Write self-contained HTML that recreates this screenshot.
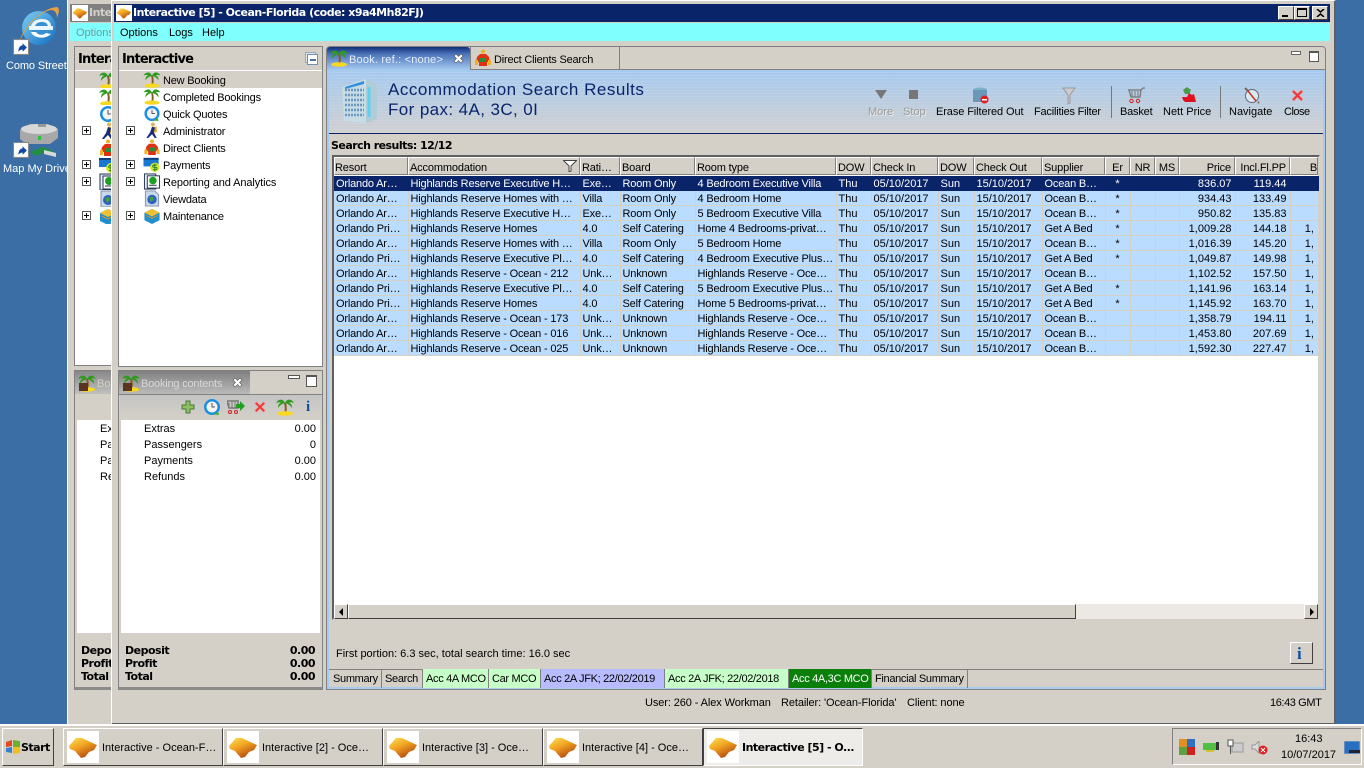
<!DOCTYPE html>
<html><head><meta charset="utf-8"><title>Interactive</title>
<style>
html,body{margin:0;padding:0}
body{width:1364px;height:768px;overflow:hidden;position:relative;background:#3a6ea5;font:11px/13px "Liberation Sans",sans-serif;color:#000}
.a,.t,svg.i{position:absolute}
.t{white-space:nowrap;line-height:15px}
.b{font-family:"DejaVu Sans",sans-serif;font-weight:bold;letter-spacing:-.5px;line-height:13px}
.n{letter-spacing:-.2px}
.btn{position:absolute;background:#d4d0c8;border:1px solid;border-color:#fff #404040 #404040 #fff;box-sizing:border-box}
table{position:absolute;left:334px;top:176px;width:984px;border-collapse:collapse;table-layout:fixed;font-size:11px}
td{height:12px;padding:2px 0 0 2px;border:1px solid #d4d0c8;border-top:0;border-left:0;white-space:nowrap;overflow:hidden;line-height:12px;background:#b9dcff}
td:nth-child(-n+5),td:nth-child(10){letter-spacing:-.18px}
td.r{text-align:right;padding:2px 3px 0 0}
td.c{text-align:center;padding:2px 0 0}
tr.s td{background:#0a246a;color:#fff;border-color:#0a246a}
.h{position:absolute;top:157px;height:18px;box-sizing:border-box;background:#d4d0c8;border-right:1px solid #808080;border-left:1px solid #fff;border-top:1px solid #fff;border-bottom:1px solid #808080;padding:4px 0 0 0;white-space:nowrap;overflow:hidden;letter-spacing:-.15px}
.bt{position:absolute;top:669px;height:19px;box-sizing:border-box;border-right:1px solid #808080;padding:3px 0 0 3px;white-space:nowrap;letter-spacing:-.32px;line-height:15px}
.task{position:absolute;top:728px;height:38px;width:160px;box-sizing:border-box;background:#d4d0c8;border:1px solid;border-color:#fff #404040 #404040 #fff}
.task .sq{position:absolute;left:3px;top:2px;width:32px;height:32px;background:#fff}
.task span{position:absolute;left:38px;top:13px;white-space:nowrap}
.lg{position:absolute;background:#fff}
</style></head><body>
<svg width="0" height="0" style="position:absolute">
<defs>
<linearGradient id="og" x1="0" y1="0" x2=".6" y2="1"><stop offset="0" stop-color="#ffe050"/><stop offset=".5" stop-color="#f0a020"/><stop offset="1" stop-color="#b04a10"/></linearGradient>
<linearGradient id="ie" x1="0" y1="0" x2="1" y2="1"><stop offset="0" stop-color="#7fd0f5"/><stop offset="1" stop-color="#0f6cc0"/></linearGradient>
<symbol id="logo" viewBox="0 0 32 32"><path d="M2 15L9 7h6l15 7-3 5-5 2-4 5-4 1-6-7-5-2z" fill="url(#og)"/></symbol>
<symbol id="palm" viewBox="0 0 18 18"><path d="M8 5c1 4 1 7 0 10h2c1-3 1-6 0-10z" fill="#8a5a20"/><path d="M9 5C7 0 2 1 0 5c2-1 4-1 5 0-2 0-3 2-3 5 2-3 4-4 7-5zM9 5c2-5 7-4 9 0-2-1-4-1-5 0 2 0 3 2 3 5-2-3-4-4-7-5z" fill="#2f9a20"/><ellipse cx="9" cy="15.500" rx="8" ry="2.300" fill="#f8d820"/></symbol>
<symbol id="clock" viewBox="0 0 18 18"><circle cx="9" cy="9" r="8" fill="#1a8fe0"/><circle cx="9" cy="9" r="5.500" fill="#f4f4f4"/><path d="M9 5v4h3" stroke="#555" fill="none"/><path d="M6 16a8 8 0 0 0 9-3l1 4z" fill="#40b030"/></symbol>
<symbol id="run" viewBox="0 0 18 18"><circle cx="10" cy="2.500" r="2" fill="#e0b060"/><rect x="9" y="5" width="5" height="6" fill="#e0a820"/><path d="M9 5l-2 6-4 6h2l4-4 3 4h2l-3-6 1-5z" fill="#1a2a80"/></symbol>
<symbol id="dc" viewBox="0 0 18 18"><circle cx="9" cy="2.500" r="2" fill="#f0b020"/><path d="M3 8l3-3h6l3 3 1 5h-3v4H5v-4H2z" fill="#e03010"/><rect x="6" y="9" width="6" height="4" fill="#209040"/><rect x="1" y="11" width="3" height="5" fill="#f0b020"/><rect x="14" y="11" width="3" height="5" fill="#f0b020"/></symbol>
<symbol id="pay" viewBox="0 0 18 18"><rect x="0" y="2" width="16" height="9" fill="#1878d0"/><rect x="0" y="2" width="16" height="2" fill="#104080"/><circle cx="12" cy="12" r="5" fill="#d8e830"/><path d="M14 9.500h-3a1.200 1.200 0 0 0 0 2.500h2a1.200 1.200 0 0 1 0 2.500h-3M12 8v8" stroke="#208020" fill="none"/></symbol>
<symbol id="rep" viewBox="0 0 18 18"><rect x="1" y="1" width="12" height="16" fill="#e8f0f8" stroke="#203050"/><rect x="4" y="3" width="13" height="13" fill="#fff" stroke="#203050"/><circle cx="10" cy="8" r="4" fill="#20a020"/><path d="M6 13h8" stroke="#203050"/></symbol>
<symbol id="view" viewBox="0 0 18 18"><path d="M2 1h10l4 4v12H2z" fill="#c8d8e8" stroke="#8090a8"/><circle cx="9" cy="10" r="5" fill="#3060c0"/><path d="M6 8l4-1 1 3-3 3z" fill="#40a040"/></symbol>
<symbol id="mnt" viewBox="0 0 18 18"><path d="M1 6l8-4 8 4v8l-8 4-8-4z" fill="#2090d0"/><path d="M1 6l8-4 8 4-8 4z" fill="#f0c030"/><path d="M3 9l6 3 6-3" stroke="#e09020" fill="none"/></symbol>
<symbol id="x" viewBox="0 0 16 16"><path d="M2 4l2-2 4 4 4-4 2 2-4 4 4 4-2 2-4-4-4 4-2-2 4-4z" fill="#e83a3a" stroke="#f4a0a0" stroke-width=".6"/></symbol>
<symbol id="short" viewBox="0 0 15 15"><rect x=".5" y=".5" width="14" height="14" fill="#fff" stroke="#888"/><path d="M5 12c0-4 2-6 4-6V4l4 4-4 4v-2c-2 0-3 1-4 2z" fill="#1048a8"/></symbol>
</defs></svg>

<!-- desktop icons -->
<svg class="i" style="left:15px;top:6px" width="46" height="42" viewBox="0 0 46 42"><circle cx="24" cy="22" r="17" fill="url(#ie)"/><ellipse cx="25" cy="22" rx="9" ry="7.500" fill="#3a8fd0"/><rect x="14" y="20" width="24" height="4" fill="#e8f6ff"/><path d="M27 13c6 0 9 3 9 7H16c1-4 5-7 11-7z" fill="#fff" opacity=".9"/><path d="M27 16c3 0 5 1 6 4H20c1-3 4-4 7-4z" fill="#3a8fd0"/><path d="M16 26c2 6 14 8 20 2l-5-1c-4 3-8 2-10-1z" fill="#fff"/><path d="M4 36C10 18 28 2 42 1c3 1 2 6 0 11 0-5-2-8-6-8C24 6 12 20 4 36z" fill="#e8a040"/></svg>
<svg class="i" style="left:13px;top:39px" width="16" height="16"><use href="#short"/></svg>
<div class="t" style="left:6px;top:59px;color:#fff;letter-spacing:-.1px">Como Street</div>
<svg class="i" style="left:18px;top:122px" width="42" height="38" viewBox="0 0 42 38"><path d="M2 8l10-6h18l10 5v9l-8 6H8l-6-5z" fill="#a8a8a8"/><ellipse cx="21" cy="7" rx="18" ry="5" fill="#d8d8d8"/><rect x="20" y="2" width="8" height="3" fill="#999"/><rect x="20" y="14" width="3" height="4" fill="#30c040"/><path d="M12 30l12-5 10 3 1 4-10-1-7 3z" fill="#209040"/><path d="M26 28l12 3v4l-12-3z" fill="#d8d8d8"/></svg>
<svg class="i" style="left:13px;top:142px" width="16" height="16"><use href="#short"/></svg>
<div class="t" style="left:3px;top:162px;color:#fff">Map My Drive</div>

<!-- back window -->
<div class="a" style="left:67px;top:0;width:46px;height:724px;background:#d4d0c8;border-left:1px solid #fff"></div>
<div class="a" style="left:70px;top:4px;width:42px;height:18px;background:#808080"></div>
<div class="lg" style="left:72px;top:5px;width:16px;height:16px"><svg width="16" height="16"><use href="#logo"/></svg></div>
<div class="t b" style="left:89px;top:6px;color:#d4d0c8">Inte</div>
<div class="a" style="left:70px;top:23px;width:42px;height:18px;background:#80ffff"></div>
<div class="t" style="left:76px;top:26px;color:#6f9a9a">Options</div>
<div class="a" style="left:74px;top:46px;width:37px;height:320px;background:#fff;border:1px solid #808080;border-right:0;box-sizing:border-box"></div>
<div class="a" style="left:75px;top:47px;width:36px;height:23px;background:#d4d0c8;border-bottom:1px solid #fff"></div>
<div class="t b" style="left:78px;top:53px;font-size:13px;letter-spacing:-.8px">Intera</div>
<div class="a" style="left:75px;top:71px;width:36px;height:17px;background:#d4d0c8"></div>
<svg class="i" style="left:99px;top:71px" width="12" height="17" viewBox="0 0 12 17"><use href="#palm" width="18" height="18"/></svg>
<svg class="i" style="left:99px;top:88px" width="12" height="17" viewBox="0 0 12 17"><use href="#palm" width="18" height="18"/></svg>
<svg class="i" style="left:99px;top:105px" width="12" height="17" viewBox="0 0 12 17"><use href="#clock" width="18" height="18"/></svg>
<svg class="i" style="left:99px;top:122px" width="12" height="17" viewBox="0 0 12 17"><use href="#run" width="18" height="18"/></svg>
<svg class="i" style="left:99px;top:139px" width="12" height="17" viewBox="0 0 12 17"><use href="#dc" width="18" height="18"/></svg>
<svg class="i" style="left:99px;top:156px" width="12" height="17" viewBox="0 0 12 17"><use href="#pay" width="18" height="18"/></svg>
<svg class="i" style="left:99px;top:173px" width="12" height="17" viewBox="0 0 12 17"><use href="#rep" width="18" height="18"/></svg>
<svg class="i" style="left:99px;top:190px" width="12" height="17" viewBox="0 0 12 17"><use href="#view" width="18" height="18"/></svg>
<svg class="i" style="left:99px;top:207px" width="12" height="17" viewBox="0 0 12 17"><use href="#mnt" width="18" height="18"/></svg>
<svg class="i" style="left:82px;top:126px" width="9" height="9"><rect x=".5" y=".5" width="8" height="8" fill="#fff" stroke="#555"/><path d="M2 4.500h5M4.500 2v5" stroke="#000"/></svg>
<svg class="i" style="left:82px;top:160px" width="9" height="9"><rect x=".5" y=".5" width="8" height="8" fill="#fff" stroke="#555"/><path d="M2 4.500h5M4.500 2v5" stroke="#000"/></svg>
<svg class="i" style="left:82px;top:177px" width="9" height="9"><rect x=".5" y=".5" width="8" height="8" fill="#fff" stroke="#555"/><path d="M2 4.500h5M4.500 2v5" stroke="#000"/></svg>
<svg class="i" style="left:82px;top:211px" width="9" height="9"><rect x=".5" y=".5" width="8" height="8" fill="#fff" stroke="#555"/><path d="M2 4.500h5M4.500 2v5" stroke="#000"/></svg>
<div class="a" style="left:74px;top:370px;width:37px;height:320px;background:#d4d0c8;border:1px solid #808080;border-right:0;border-bottom:3px solid #8a8a8a;box-sizing:border-box"></div>
<div class="a" style="left:75px;top:371px;width:36px;height:23px;background:linear-gradient(#888,#c0c0c0)"></div>
<svg class="i" style="left:78px;top:374px" width="18" height="18"><use href="#palm"/><rect x="1" y="9" width="9" height="8" fill="#5a3420"/></svg>
<div class="t" style="left:97px;top:377px;color:#d4d0c8">Bo</div>
<div class="a" style="left:77px;top:420px;width:34px;height:213px;background:#fff"></div>
<div class="t" style="left:100px;top:422px">Ex</div><div class="t" style="left:100px;top:438px">Pa</div><div class="t" style="left:100px;top:454px">Pa</div><div class="t" style="left:100px;top:470px">Re</div>
<div class="t b" style="left:81px;top:644px">Depo</div><div class="t b" style="left:81px;top:657px">Profit</div><div class="t b" style="left:81px;top:670px">Total</div>

<!-- main window -->
<div class="a" style="left:111px;top:0;width:1225px;height:725px;background:#d4d0c8;border-left:1px solid #fff;border-top:1px solid #fff;border-right:2px solid #606060;border-bottom:2px solid #606060;box-sizing:border-box"></div>
<div class="a" style="left:114px;top:4px;width:1216px;height:18px;background:#0a246a"></div>
<div class="lg" style="left:116px;top:5px;width:16px;height:16px"><svg width="16" height="16"><use href="#logo"/></svg></div>
<div class="t b" style="left:133px;top:6px;color:#fff;font-size:11px;letter-spacing:-.49px">Interactive [5] - Ocean-Florida (code: x9a4Mh82FJ)</div>
<div class="btn" style="left:1278px;top:6px;width:16px;height:14px"><div class="a" style="left:3px;top:8px;width:6px;height:2px;background:#000"></div></div>
<div class="btn" style="left:1294px;top:6px;width:16px;height:14px"><div class="a" style="left:2px;top:1px;width:10px;height:9px;border:1px solid #000;border-top-width:2px;box-sizing:border-box"></div></div>
<div class="btn" style="left:1312px;top:6px;width:16px;height:14px"><svg class="i" style="left:3px;top:2px" width="9" height="8"><path d="M1 0l3.500 3L8 0M1 8l3.500-3L8 8" stroke="#000" stroke-width="1.500" fill="none"/></svg></div>
<div class="a" style="left:114px;top:23px;width:1216px;height:18px;background:#80ffff"></div>
<div class="t" style="left:120px;top:26px">Options</div><div class="t" style="left:169px;top:26px">Logs</div><div class="t" style="left:202px;top:26px">Help</div>

<!-- nav panel -->
<div class="a" style="left:118px;top:46px;width:205px;height:321px;background:#fff;border:1px solid #808080;box-sizing:border-box"></div>
<div class="a" style="left:119px;top:47px;width:203px;height:23px;background:#d4d0c8;border-bottom:1px solid #fff"></div>
<div class="t b" style="left:122px;top:53px;font-size:13px;letter-spacing:-.8px">Interactive</div>
<svg class="i" style="left:305px;top:52px" width="13" height="13"><rect x=".5" y=".5" width="10" height="10" fill="#d8e4f0" stroke="#9ab"/><rect x="2.500" y="2.500" width="10" height="10" fill="#fff" stroke="#7090b0"/><path d="M5 8h6" stroke="#104080" stroke-width="1.500"/></svg>
<div class="a" style="left:119px;top:71px;width:203px;height:17px;background:#d4d0c8"></div>
<svg class="i" style="left:143px;top:71px" width="18" height="17"><use href="#palm"/></svg>
<svg class="i" style="left:143px;top:88px" width="18" height="17"><use href="#palm"/></svg>
<svg class="i" style="left:143px;top:105px" width="18" height="17"><use href="#clock"/></svg>
<svg class="i" style="left:143px;top:122px" width="18" height="17"><use href="#run"/></svg>
<svg class="i" style="left:143px;top:139px" width="18" height="17"><use href="#dc"/></svg>
<svg class="i" style="left:143px;top:156px" width="18" height="17"><use href="#pay"/></svg>
<svg class="i" style="left:143px;top:173px" width="18" height="17"><use href="#rep"/></svg>
<svg class="i" style="left:143px;top:190px" width="18" height="17"><use href="#view"/></svg>
<svg class="i" style="left:143px;top:207px" width="18" height="17"><use href="#mnt"/></svg>
<svg class="i" style="left:126px;top:126px" width="9" height="9"><rect x=".5" y=".5" width="8" height="8" fill="#fff" stroke="#555"/><path d="M2 4.500h5M4.500 2v5" stroke="#000"/></svg>
<svg class="i" style="left:126px;top:160px" width="9" height="9"><rect x=".5" y=".5" width="8" height="8" fill="#fff" stroke="#555"/><path d="M2 4.500h5M4.500 2v5" stroke="#000"/></svg>
<svg class="i" style="left:126px;top:177px" width="9" height="9"><rect x=".5" y=".5" width="8" height="8" fill="#fff" stroke="#555"/><path d="M2 4.500h5M4.500 2v5" stroke="#000"/></svg>
<svg class="i" style="left:126px;top:211px" width="9" height="9"><rect x=".5" y=".5" width="8" height="8" fill="#fff" stroke="#555"/><path d="M2 4.500h5M4.500 2v5" stroke="#000"/></svg>
<div class="t n" style="left:163px;top:74px">New Booking</div>
<div class="t n" style="left:163px;top:91px">Completed Bookings</div>
<div class="t n" style="left:163px;top:108px">Quick Quotes</div>
<div class="t n" style="left:163px;top:125px">Administrator</div>
<div class="t n" style="left:163px;top:142px">Direct Clients</div>
<div class="t n" style="left:163px;top:159px">Payments</div>
<div class="t n" style="left:163px;top:176px;letter-spacing:-.1px">Reporting and Analytics</div>
<div class="t n" style="left:163px;top:193px">Viewdata</div>
<div class="t n" style="left:163px;top:210px">Maintenance</div>

<!-- booking contents -->
<div class="a" style="left:118px;top:370px;width:205px;height:320px;background:#d4d0c8;border:1px solid #808080;border-bottom:3px solid #8a8a8a;box-sizing:border-box"></div>
<div class="a" style="left:119px;top:371px;width:131px;height:23px;background:linear-gradient(#808080,#bbb);"></div>
<div class="a" style="left:119px;top:394px;width:203px;height:1px;background:#808080"></div>
<svg class="i" style="left:122px;top:374px" width="18" height="18"><use href="#palm"/><rect x="1" y="9" width="9" height="8" fill="#5a3420"/></svg>
<div class="t n" style="left:141px;top:377px;color:#d8d8d8">Booking contents</div>
<svg class="i" style="left:232px;top:377px" width="11" height="11"><path d="M1 3l2-2 2.500 2.500L8 1l2 2-2.500 2.500L10 8l-2 2-2.500-2.500L3 10 1 8l2.500-2.500z" fill="#fff" stroke="#555" stroke-width=".6"/></svg>
<div class="a" style="left:288px;top:375px;width:10px;border:1px solid #555;background:#fff;height:2px"></div>
<div class="a" style="left:306px;top:375px;width:9px;height:9px;border:1px solid #555;border-top-width:2px;background:#fff"></div>
<div class="a" style="left:120px;top:395px;width:201px;height:24px;background:linear-gradient(#c4c4c4,#d4d0c8)"></div>
<svg class="i" style="left:181px;top:400px" width="14" height="14"><path d="M5 1h4v4h4v4H9v4H5V9H1V5h4z" fill="#8ec060" stroke="#4a7a3a"/></svg>
<svg class="i" style="left:203px;top:398px" width="18" height="18"><use href="#clock"/></svg>
<svg class="i" style="left:227px;top:399px" width="18" height="16" viewBox="0 0 18 16"><path d="M0 2h11v7H2z" fill="none" stroke="#777" stroke-width="1.500"/><path d="M2 4v5M5 3v6M8 3v6" stroke="#777"/><circle cx="3" cy="13" r="1.500" fill="none" stroke="#d02020"/><circle cx="9" cy="13" r="1.500" fill="none" stroke="#d02020"/><path d="M9 5h4V2l5 5-5 5V9H9z" fill="#20a020"/></svg>
<svg class="i" style="left:253px;top:400px" width="14" height="14"><use href="#x"/></svg>
<svg class="i" style="left:276px;top:398px" width="18" height="18"><use href="#palm"/></svg>
<div class="t" style="left:306px;top:399px;font:bold 15px 'Liberation Serif',serif;color:#1050a0">i</div>
<div class="a" style="left:121px;top:420px;width:199px;height:213px;background:#fff"></div>
<div class="t" style="left:144px;top:422px">Extras</div><div class="t" style="right:1048px;top:422px">0.00</div>
<div class="t" style="left:144px;top:438px">Passengers</div><div class="t" style="right:1048px;top:438px">0</div>
<div class="t" style="left:144px;top:454px">Payments</div><div class="t" style="right:1048px;top:454px">0.00</div>
<div class="t" style="left:144px;top:470px">Refunds</div><div class="t" style="right:1048px;top:470px">0.00</div>
<div class="t b" style="left:125px;top:644px">Deposit</div><div class="t b" style="right:1049px;top:644px">0.00</div>
<div class="t b" style="left:125px;top:657px">Profit</div><div class="t b" style="right:1049px;top:657px">0.00</div>
<div class="t b" style="left:125px;top:670px">Total</div><div class="t b" style="right:1049px;top:670px">0.00</div>

<!-- main panel -->
<div class="a" style="left:326px;top:46px;width:1000px;height:644px;background:#d4d0c8;border:1px solid #808080;border-radius:4px 4px 0 0;box-sizing:border-box"></div>
<div class="a" style="left:327px;top:69px;width:998px;height:620px;border:2px solid #a6caf0;border-top:0;box-sizing:border-box"></div>
<div class="a" style="left:327px;top:69px;width:998px;height:1px;background:#808080"></div>
<div class="a" style="left:327px;top:47px;width:143px;height:23px;background:linear-gradient(#0f2e78 0,#4a72b8 30%,#a6caf0 100%);border-radius:3px 3px 0 0"></div>
<svg class="i" style="left:330px;top:49px" width="18" height="18"><use href="#palm"/></svg>
<div class="t" style="left:349px;top:53px;color:#e8f0ff;letter-spacing:.2px">Book. ref.: &lt;none&gt;</div>
<svg class="i" style="left:453px;top:53px" width="11" height="11"><path d="M1 3l2-2 2.500 2.500L8 1l2 2-2.500 2.500L10 8l-2 2-2.500-2.500L3 10 1 8l2.500-2.500z" fill="#fff" stroke="#555" stroke-width=".6"/></svg>
<div class="a" style="left:470px;top:46px;width:150px;height:24px;border:1px solid #808080;background:#d4d0c8;box-sizing:border-box"></div>
<svg class="i" style="left:474px;top:49px" width="18" height="18"><use href="#dc"/></svg>
<div class="t n" style="left:494px;top:53px">Direct Clients Search</div>
<div class="a" style="left:1291px;top:51px;width:8px;height:2px;background:#fff;border:1px solid #666"></div>
<div class="a" style="left:1309px;top:51px;width:8px;height:8px;background:#fff;border:1px solid #555;border-top-width:2px"></div>

<div class="a" style="left:329px;top:70px;width:994px;height:63px;background:repeating-linear-gradient(0deg,rgba(255,255,255,.09) 0,rgba(255,255,255,.09) 1px,transparent 1px,transparent 3px),linear-gradient(#a6caf0,#d0d0d0)"></div>
<div class="a" style="left:329px;top:133px;width:994px;height:1px;background:#0a246a"></div>
<svg class="i" style="left:341px;top:77px" width="37" height="48" viewBox="0 0 37 48"><path d="M1 10l24-8v44L3 44z" fill="#c8dce4"/><path d="M25 2l11 6v34l-11 4z" fill="#b0ccd8"/><path d="M4 13h19M4 18h19M4 23h19M4 28h19M4 33h19M4 38h19" stroke="#6a96c0" stroke-width="2.500" stroke-dasharray="2 1"/><path d="M4 10l19-6v3L4 12z" fill="#3090e0"/><path d="M28 10v30" stroke="#60d0f0" stroke-width="3"/></svg>
<div class="t" style="left:388px;top:80px;font-size:17px;line-height:19px;color:#0a246a;letter-spacing:.52px">Accommodation Search Results</div>
<div class="t" style="left:388px;top:100px;font-size:17px;line-height:19px;color:#0a246a;letter-spacing:.4px">For pax: 4A, 3C, 0I</div>

<svg class="i" style="left:875px;top:89px" width="12" height="11"><path d="M0 1h12L6 10z" fill="#777"/></svg>
<div class="a" style="left:909px;top:90px;width:9px;height:9px;background:#777"></div>
<div class="t" style="left:868px;top:105px;color:#999;text-shadow:1px 1px 0 #eee">More</div>
<div class="t" style="left:903px;top:105px;color:#999;text-shadow:1px 1px 0 #eee">Stop</div>
<svg class="i" style="left:973px;top:87px" width="17" height="17"><ellipse cx="7" cy="3" rx="7" ry="2.500" fill="#7ab0c8"/><path d="M0 3v12h14V3z" fill="#6a98b8"/><circle cx="11.500" cy="12.500" r="4" fill="#e02020"/><rect x="9" y="12" width="5" height="1.500" fill="#fff"/></svg>
<div class="t" style="left:936px;top:105px;letter-spacing:-.1px">Erase Filtered Out</div>
<svg class="i" style="left:1062px;top:87px" width="14" height="18"><path d="M1 1h12L8 8v8l-2 1V8z" fill="#ccc" stroke="#999"/></svg>
<div class="t" style="left:1034px;top:105px;letter-spacing:-.2px">Facilities Filter</div>
<div class="a" style="left:1111px;top:86px;width:1px;height:32px;background:#777"></div>
<svg class="i" style="left:1128px;top:87px" width="17" height="17" viewBox="0 0 17 17"><path d="M0 3h13l2-2h2M1 3l2 7h9l1-7" fill="none" stroke="#777" stroke-width="1.300"/><path d="M4 4v6M7 4v6M10 4v6" stroke="#777"/><circle cx="3.500" cy="14" r="1.700" fill="none" stroke="#d02020"/><circle cx="10" cy="14" r="1.700" fill="none" stroke="#d02020"/></svg>
<div class="t" style="left:1120px;top:105px;letter-spacing:-.2px">Basket</div>
<svg class="i" style="left:1180px;top:87px" width="17" height="17" viewBox="0 0 17 17"><path d="M3 3l4-3 4 3-2 4H5z" fill="#4a9a4a"/><path d="M2 10h5l2-4 3 2 2-1 2 8H5l-2-2z" fill="#e01020"/></svg>
<div class="t" style="left:1163px;top:105px">Nett Price</div>
<div class="a" style="left:1220px;top:86px;width:1px;height:32px;background:#777"></div>
<svg class="i" style="left:1244px;top:87px" width="16" height="17" viewBox="0 0 16 17"><circle cx="8" cy="9" r="6.500" fill="#d8eaf4" stroke="#667"/><path d="M4 4l8 10" stroke="#d03020" stroke-width="1.500"/><path d="M1 1l3 3M14 15l1 1" stroke="#765" stroke-width="2"/></svg>
<div class="t" style="left:1229px;top:105px">Navigate</div>
<svg class="i" style="left:1290px;top:88px" width="15" height="15"><use href="#x"/></svg>
<div class="t" style="left:1284px;top:105px;letter-spacing:-.5px">Close</div>

<div class="t b" style="left:331px;top:139px;letter-spacing:-.53px">Search results: 12/12</div>

<!-- table -->
<div class="a" style="left:332px;top:155px;width:988px;height:465px;background:#fff;border:2px solid;border-color:#606060 #d4d0c8 #d4d0c8 #606060;box-sizing:border-box"></div>
<div class="h" style="left:334px;width:74px">Resort</div>
<div class="h" style="left:408px;width:172px;padding-left:1px">Accommodation<svg class="i" style="right:2px;top:2px" width="14" height="12"><path d="M.5 .5h13L8 6v5l-2 1V6z" fill="#fff" stroke="#444"/></svg></div>
<div class="h" style="left:580px;width:40px;padding-left:1px">Rati…</div>
<div class="h" style="left:620px;width:75px;padding-left:1px">Board</div>
<div class="h" style="left:695px;width:141px;padding-left:1px">Room type</div>
<div class="h" style="left:836px;width:35px;padding-left:1px">DOW</div>
<div class="h" style="left:871px;width:67px;padding-left:1px">Check In</div>
<div class="h" style="left:938px;width:36px;padding-left:1px">DOW</div>
<div class="h" style="left:974px;width:68px;padding-left:1px">Check Out</div>
<div class="h" style="left:1042px;width:63px;padding-left:1px">Supplier</div>
<div class="h" style="left:1105px;width:25px;text-align:center">Er</div>
<div class="h" style="left:1130px;width:25px;text-align:center">NR</div>
<div class="h" style="left:1155px;width:24px;text-align:center">MS</div>
<div class="h" style="left:1179px;width:56px;text-align:right;padding-right:3px">Price</div>
<div class="h" style="left:1235px;width:55px;text-align:right;padding-right:3px">Incl.Fl.PP</div>
<div class="h" style="left:1290px;width:28px;text-align:right;padding-right:0">B</div>
<table><colgroup><col style="width:74px"><col style="width:172px"><col style="width:40px"><col style="width:75px"><col style="width:141px"><col style="width:35px"><col style="width:67px"><col style="width:36px"><col style="width:68px"><col style="width:63px"><col style="width:25px"><col style="width:25px"><col style="width:24px"><col style="width:56px"><col style="width:55px"><col style="width:28px"></colgroup>
<tr class="s"><td>Orlando Ar…</td><td>Highlands Reserve Executive H…</td><td>Exe…</td><td>Room Only</td><td>4 Bedroom Executive Villa</td><td>Thu</td><td>05/10/2017</td><td>Sun</td><td>15/10/2017</td><td>Ocean B…</td><td class="c">*</td><td></td><td></td><td class="r">836.07</td><td class="r">119.44</td><td class="r"></td></tr>
<tr><td>Orlando Ar…</td><td>Highlands Reserve Homes with …</td><td>Villa</td><td>Room Only</td><td>4 Bedroom Home</td><td>Thu</td><td>05/10/2017</td><td>Sun</td><td>15/10/2017</td><td>Ocean B…</td><td class="c">*</td><td></td><td></td><td class="r">934.43</td><td class="r">133.49</td><td class="r"></td></tr>
<tr><td>Orlando Ar…</td><td>Highlands Reserve Executive H…</td><td>Exe…</td><td>Room Only</td><td>5 Bedroom Executive Villa</td><td>Thu</td><td>05/10/2017</td><td>Sun</td><td>15/10/2017</td><td>Ocean B…</td><td class="c">*</td><td></td><td></td><td class="r">950.82</td><td class="r">135.83</td><td class="r"></td></tr>
<tr><td>Orlando Pri…</td><td>Highlands Reserve Homes</td><td>4.0</td><td>Self Catering</td><td>Home 4 Bedrooms-privat…</td><td>Thu</td><td>05/10/2017</td><td>Sun</td><td>15/10/2017</td><td>Get A Bed</td><td class="c">*</td><td></td><td></td><td class="r">1,009.28</td><td class="r">144.18</td><td>&nbsp;&nbsp;&nbsp;&nbsp;1,</td></tr>
<tr><td>Orlando Ar…</td><td>Highlands Reserve Homes with …</td><td>Villa</td><td>Room Only</td><td>5 Bedroom Home</td><td>Thu</td><td>05/10/2017</td><td>Sun</td><td>15/10/2017</td><td>Ocean B…</td><td class="c">*</td><td></td><td></td><td class="r">1,016.39</td><td class="r">145.20</td><td>&nbsp;&nbsp;&nbsp;&nbsp;1,</td></tr>
<tr><td>Orlando Pri…</td><td>Highlands Reserve Executive Pl…</td><td>4.0</td><td>Self Catering</td><td>4 Bedroom Executive Plus…</td><td>Thu</td><td>05/10/2017</td><td>Sun</td><td>15/10/2017</td><td>Get A Bed</td><td class="c">*</td><td></td><td></td><td class="r">1,049.87</td><td class="r">149.98</td><td>&nbsp;&nbsp;&nbsp;&nbsp;1,</td></tr>
<tr><td>Orlando Ar…</td><td>Highlands Reserve - Ocean - 212</td><td>Unk…</td><td>Unknown</td><td>Highlands Reserve - Oce…</td><td>Thu</td><td>05/10/2017</td><td>Sun</td><td>15/10/2017</td><td>Ocean B…</td><td class="c"></td><td></td><td></td><td class="r">1,102.52</td><td class="r">157.50</td><td>&nbsp;&nbsp;&nbsp;&nbsp;1,</td></tr>
<tr><td>Orlando Pri…</td><td>Highlands Reserve Executive Pl…</td><td>4.0</td><td>Self Catering</td><td>5 Bedroom Executive Plus…</td><td>Thu</td><td>05/10/2017</td><td>Sun</td><td>15/10/2017</td><td>Get A Bed</td><td class="c">*</td><td></td><td></td><td class="r">1,141.96</td><td class="r">163.14</td><td>&nbsp;&nbsp;&nbsp;&nbsp;1,</td></tr>
<tr><td>Orlando Pri…</td><td>Highlands Reserve Homes</td><td>4.0</td><td>Self Catering</td><td>Home 5 Bedrooms-privat…</td><td>Thu</td><td>05/10/2017</td><td>Sun</td><td>15/10/2017</td><td>Get A Bed</td><td class="c">*</td><td></td><td></td><td class="r">1,145.92</td><td class="r">163.70</td><td>&nbsp;&nbsp;&nbsp;&nbsp;1,</td></tr>
<tr><td>Orlando Ar…</td><td>Highlands Reserve - Ocean - 173</td><td>Unk…</td><td>Unknown</td><td>Highlands Reserve - Oce…</td><td>Thu</td><td>05/10/2017</td><td>Sun</td><td>15/10/2017</td><td>Ocean B…</td><td class="c"></td><td></td><td></td><td class="r">1,358.79</td><td class="r">194.11</td><td>&nbsp;&nbsp;&nbsp;&nbsp;1,</td></tr>
<tr><td>Orlando Ar…</td><td>Highlands Reserve - Ocean - 016</td><td>Unk…</td><td>Unknown</td><td>Highlands Reserve - Oce…</td><td>Thu</td><td>05/10/2017</td><td>Sun</td><td>15/10/2017</td><td>Ocean B…</td><td class="c"></td><td></td><td></td><td class="r">1,453.80</td><td class="r">207.69</td><td>&nbsp;&nbsp;&nbsp;&nbsp;1,</td></tr>
<tr><td>Orlando Ar…</td><td>Highlands Reserve - Ocean - 025</td><td>Unk…</td><td>Unknown</td><td>Highlands Reserve - Oce…</td><td>Thu</td><td>05/10/2017</td><td>Sun</td><td>15/10/2017</td><td>Ocean B…</td><td class="c"></td><td></td><td></td><td class="r">1,592.30</td><td class="r">227.47</td><td>&nbsp;&nbsp;&nbsp;&nbsp;1,</td></tr>
</table>
<!-- scrollbar -->
<div class="a" style="left:334px;top:604px;width:984px;height:15px;background:#ece9e4"></div>
<div class="btn" style="left:334px;top:604px;width:14px;height:15px"><svg class="i" style="left:3px;top:3px" width="6" height="8"><path d="M5 0v8L1 4z" fill="#000"/></svg></div>
<div class="btn" style="left:348px;top:604px;width:728px;height:15px"></div>
<div class="btn" style="left:1304px;top:604px;width:14px;height:15px"><svg class="i" style="left:4px;top:3px" width="6" height="8"><path d="M1 0v8l4-4z" fill="#000"/></svg></div>

<div class="t" style="left:336px;top:647px">First portion: 6.3 sec, total search time: 16.0 sec</div>
<div class="btn" style="left:1290px;top:642px;width:23px;height:22px"><div class="t" style="left:6px;top:2px;font:bold 17px/17px 'Liberation Serif',serif;color:#1050a0">i</div></div>
<div class="a" style="left:329px;top:669px;width:994px;height:1px;background:#808080"></div>
<div class="bt" style="left:330px;width:52px">Summary</div>
<div class="bt" style="left:382px;width:41px">Search</div>
<div class="bt" style="left:423px;width:66px;background:#c8ffc8">Acc 4A MCO</div>
<div class="bt" style="left:489px;width:52px;background:#c8ffc8">Car MCO</div>
<div class="bt" style="left:541px;width:124px;background:#b8bcff">Acc 2A JFK; 22/02/2019</div>
<div class="bt" style="left:665px;width:124px;background:#c8ffc8">Acc 2A JFK; 22/02/2018</div>
<div class="bt" style="left:789px;width:83px;background:#0a800a;color:#fff">Acc 4A,3C MCO</div>
<div class="bt" style="left:872px;width:96px">Financial Summary</div>

<div class="t" style="left:645px;top:696px;letter-spacing:-.1px">User: 260 - Alex Workman</div>
<div class="t" style="left:781px;top:696px;letter-spacing:-.1px">Retailer: 'Ocean-Florida'</div>
<div class="t" style="left:907px;top:696px;letter-spacing:-.1px">Client: none</div>
<div class="t" style="left:1270px;top:696px;letter-spacing:-.4px">16:43 GMT</div>

<!-- taskbar -->
<div class="a" style="left:0;top:724px;width:1364px;height:44px;background:#d4d0c8;border-top:2px solid #fff;box-sizing:border-box"></div>
<div class="task" style="left:2px;width:52px"><svg class="i" style="left:2px;top:10px" width="16" height="15"><path d="M1 3l6-2v6L1 8z" fill="#e04a20"/><path d="M8 1l7 1v6H8z" fill="#70b030"/><path d="M1 9l6-1v6l-6-1z" fill="#3a80d0"/><path d="M8 8h7v6l-7 1z" fill="#f0c020"/></svg><span class="b" style="left:18px;top:12px">Start</span></div>
<div class="task" style="left:63px"><div class="sq"><svg width="32" height="32"><use href="#logo"/></svg></div><span>Interactive - Ocean-F…</span></div>
<div class="task" style="left:223px"><div class="sq"><svg width="32" height="32"><use href="#logo"/></svg></div><span>Interactive [2] - Oce…</span></div>
<div class="task" style="left:383px"><div class="sq"><svg width="32" height="32"><use href="#logo"/></svg></div><span>Interactive [3] - Oce…</span></div>
<div class="task" style="left:543px"><div class="sq"><svg width="32" height="32"><use href="#logo"/></svg></div><span>Interactive [4] - Oce…</span></div>
<div class="task" style="left:703px;background:#eeece8;border-color:#404040 #fff #fff #404040"><div class="sq"><svg width="32" height="32"><use href="#logo"/></svg></div><span class="b" style="top:12px">Interactive [5] - O…</span></div>
<div class="a" style="left:1172px;top:728px;width:190px;height:37px;border:1px solid;border-color:#808080 #fff #fff #808080;box-sizing:border-box"></div>
<svg class="i" style="left:1179px;top:739px" width="16" height="16"><rect width="8" height="8" fill="#e09020"/><rect x="8" width="8" height="8" fill="#3070c0"/><rect y="8" width="8" height="8" fill="#60a040"/><rect x="8" y="8" width="8" height="8" fill="#d02020"/></svg>
<svg class="i" style="left:1203px;top:742px" width="16" height="10"><rect y="1" width="13" height="7" fill="#50c040"/><rect x="13" width="3" height="8" fill="#333"/><rect x="3" y="8" width="8" height="2" fill="#d8c030"/></svg>
<svg class="i" style="left:1227px;top:739px" width="17" height="16"><rect x="5" y="4" width="11" height="9" fill="#ccc" stroke="#999"/><rect x="1" y="1" width="5" height="6" fill="#fff" stroke="#555"/><path d="M3.500 7v8" stroke="#555"/></svg>
<svg class="i" style="left:1251px;top:741px" width="17" height="14"><path d="M1 4h3l4-4v12L4 8H1z" fill="#ddd" stroke="#999"/><circle cx="12" cy="9" r="4.500" fill="#e02020"/><path d="M10 7l4 4M14 7l-4 4" stroke="#fff"/></svg>
<div class="t" style="left:1295px;top:732px">16:43</div>
<div class="t" style="left:1281px;top:748px">10/07/2017</div>
<svg class="i" style="left:1344px;top:741px" width="16" height="13"><rect width="16" height="13" fill="#2a70c0" stroke="#9ab"/><rect x="5" y="9" width="11" height="3" fill="#223"/></svg>
</body></html>
